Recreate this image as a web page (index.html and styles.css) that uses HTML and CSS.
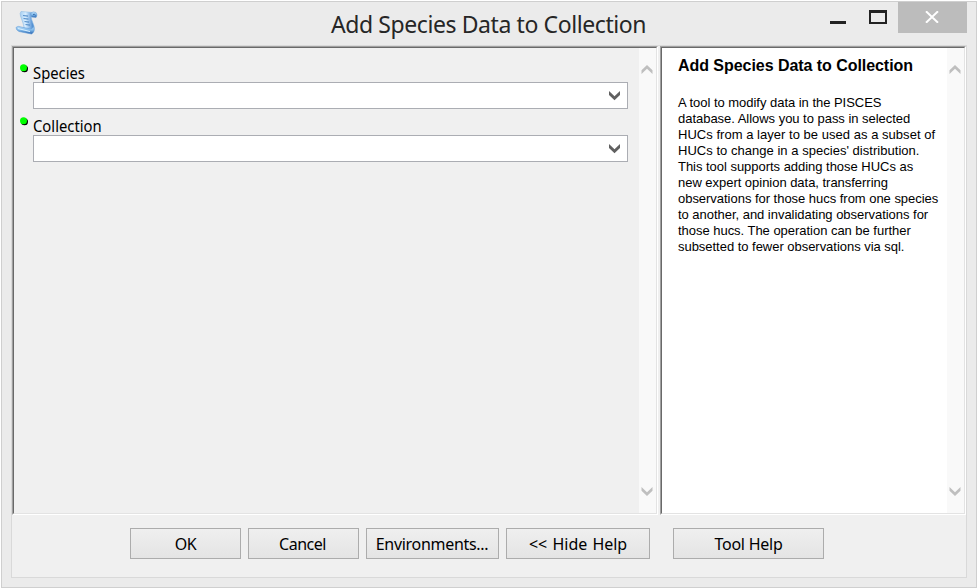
FILE: index.html
```
<!DOCTYPE html>
<html lang="en">
<head>
<meta charset="utf-8">
<title>Add Species Data to Collection</title>
<link rel="stylesheet" href="styles.css">
</head>
<body>
<div class="window">
  <header class="titlebar">
    <svg class="app-icon" width="24" height="26" viewBox="0 0 24 26">
      <defs>
        <linearGradient id="paper" x1="0" y1="0" x2="1" y2="0"><stop offset="0" stop-color="#a5cdf0"/><stop offset=".4" stop-color="#d8eeff"/><stop offset="1" stop-color="#3279c8"/></linearGradient>
        <linearGradient id="roll" x1="0" y1="0" x2="0" y2="1"><stop offset="0" stop-color="#c5e3fa"/><stop offset=".5" stop-color="#82bbeb"/><stop offset="1" stop-color="#245fac"/></linearGradient>
      </defs>
      <path d="M6 1.500 18 2.500Q15.500 5 16.500 9L19 16Q20 21 17 23L8 21Q10 18 8 13L5.500 6Q4.500 3 6 1.500Z" fill="url(#paper)" stroke="#8ebce4" stroke-width=".6"/>
      <path d="M16 3Q18 1 21 2.500Q23 5 21 7.500L16.500 7Q15.500 5 16 3Z" fill="url(#roll)" stroke="#639bd5" stroke-width=".5"/>
      <path d="M18 4.500Q20 3.500 20.500 5.500" fill="none" stroke="#386fae"/>
      <path d="M1 17.500Q3 15.500 6 17L16 19Q18 18.500 18.500 16Q20.500 22 16.500 24L4 21.500Q1 20 1 17.500Z" fill="url(#roll)" stroke="#5f9ad6" stroke-width=".6"/>
      <path d="M3 18.500 15 21.500" stroke="#d8efff" stroke-width="1.200"/>
      <path d="M8 5.500l5 .6M8.500 8.500l5 .6M9.500 11.500l4.500 .6M10.500 14.500l4.500 .6" stroke="#568fc9" stroke-width="1.100"/>
    </svg>
    <h1 class="title">Add Species Data to Collection</h1>
    <div class="controls">
      <span class="minimize"></span>
      <span class="maximize"></span>
      <span class="close"><svg width="14" height="12" viewBox="0 0 14 12"><path d="M1 .3 13 11.700M13 .3 1 11.700" stroke="#fff" stroke-width="2"/></svg></span>
    </div>
  </header>
  <main class="client">
    <div class="panels">
      <section class="panel form">
        <div class="panel-body fields">
          <div class="field">
            <svg class="dot" width="9" height="9" viewBox="0 0 9 9"><circle cx="4.500" cy="4.800" r="3.500" fill="#000"/><circle cx="3.500" cy="3.800" r="3.500" fill="#0f0"/></svg>
            <label class="label"><span class="label-text">Species</span></label>
            <div class="combo"><svg width="13" height="10" viewBox="0 0 13 10"><path d="M1 0 6.500 5.300 12 0V4L6.500 9.300 1 4Z" fill="#606060"/></svg></div>
          </div>
          <div class="field">
            <svg class="dot" width="9" height="9" viewBox="0 0 9 9"><circle cx="4.500" cy="4.800" r="3.500" fill="#000"/><circle cx="3.500" cy="3.800" r="3.500" fill="#0f0"/></svg>
            <label class="label"><span class="label-text">Collection</span></label>
            <div class="combo"><svg width="13" height="10" viewBox="0 0 13 10"><path d="M1 0 6.500 5.300 12 0V4L6.500 9.300 1 4Z" fill="#606060"/></svg></div>
          </div>
        </div>
        <div class="scrollbar">
          <svg width="12" height="10" viewBox="0 0 12 10"><path d="M.5 9V5.300L6 0 11.500 5.300V9L6 3.800Z" fill="#bfbfbf"/></svg>
          <svg width="12" height="10" viewBox="0 0 12 10"><path d="M.5 0V3.700L6 9 11.500 3.700V0L6 5.200Z" fill="#bfbfbf"/></svg>
        </div>
      </section>
      <section class="panel help">
        <div class="panel-body help-body">
          <h2 class="help-title">Add Species Data to Collection</h2>
          <p class="help-text">A tool to modify data in the PISCES<br>database. Allows you to pass in selected<br><span class="wide">HUCs from a layer to be used as a subset of</span><br><span class="wide">HUCs to change in a species' distribution.</span><br>This tool supports adding those HUCs as<br>new expert opinion data, transferring<br>observations for those hucs from one species<br>to another, and invalidating observations for<br>those hucs. The operation can be further<br>subsetted to fewer observations via sql.</p>
        </div>
        <div class="scrollbar">
          <svg width="12" height="10" viewBox="0 0 12 10"><path d="M.5 9V5.300L6 0 11.500 5.300V9L6 3.800Z" fill="#bfbfbf"/></svg>
          <svg width="12" height="10" viewBox="0 0 12 10"><path d="M.5 0V3.700L6 9 11.500 3.700V0L6 5.200Z" fill="#bfbfbf"/></svg>
        </div>
      </section>
    </div>
    <footer class="buttons">
      <button class="btn ok">OK</button>
      <button class="btn cancel">Cancel</button>
      <button class="btn env">Environments...</button>
      <button class="btn hide">&lt;&lt; Hide Help</button>
      <button class="btn tool">Tool Help</button>
    </footer>
  </main>
</div>
</body>
</html>
```
FILE: styles.css
```
* { box-sizing: border-box; }
body { margin: 0; background: #fff; font-family: "Noto Sans", "Open Sans", sans-serif; color: #000; overflow: hidden; }
.window { margin: 1px 0 0 1px; width: 976px; height: 587px; border: 1px solid #cfcfcf; background: #ebebeb; }
.titlebar { display: flex; height: 43px; padding-left: 13px; }
.app-icon { flex: none; margin-top: 8px; }
.title { flex: none; width: 330px; margin: 0 0 0 292px; font-size: 23px; line-height: 44px; font-weight: 400; white-space: nowrap; letter-spacing: -0.41px; color: #262626; }
.controls { display: flex; flex: none; margin-left: 169px; }
.minimize { width: 16px; height: 3px; margin-top: 19px; background: #222; }
.maximize { width: 18px; height: 14px; margin: 8px 0 0 23px; border: 2px solid #222; border-top-width: 3px; }
.close { display: flex; align-items: center; justify-content: center; width: 69px; height: 31px; padding: 0 1px 1px 0; margin-left: 11px; background: #bcbcbc; }
.client { width: 956px; height: 533px; margin-left: 9px; border: 1px solid #d9d9d9; background: #f0f0f0; }
.panels { display: flex; gap: 2px; height: 469px; }
.panel { display: flex; border: 1px solid; border-color: #a0a0a0 #fff #fff #a0a0a0; }
.form { width: 646px; }
.help { width: 306px; }
.panel-body { flex: 1; border: 1px solid; border-color: #696969 transparent #e3e3e3 #696969; border-right: 0; }
.scrollbar { display: flex; flex-direction: column; justify-content: space-between; align-items: flex-start; width: 18px; padding: 17px 0 16px 2px; background: #f9f9f9; border: 1px solid; border-color: #696969 #e3e3e3 #e3e3e3; border-left: 0; }
.fields { padding: 14px 11px 0 6px; }
.field { display: grid; grid-template-columns: 13px 595px; grid-template-rows: 20px 27px; margin-bottom: 6px; }
.dot { margin-top: 2px; }
.label { font-size: 16px; line-height: 23px; white-space: nowrap; }
.label-text { display: inline-block; transform: scaleX(.925); transform-origin: left; }
.combo { grid-column: 2; display: flex; align-items: center; justify-content: flex-end; padding-right: 6px; border: 1px solid #abadb3; background: #fff; }
.help-body { padding: 8px 0 0 16px; background: #fff; font-family: "Liberation Sans", sans-serif; white-space: nowrap; }
.help-title { margin: 0; font-size: 16px; line-height: 19px; letter-spacing: -0.05px; }
.help-text { margin: 20px 0 0; font-size: 13px; line-height: 16px; letter-spacing: -0.03px; }
.wide { letter-spacing: 0.03px; }
.buttons { display: flex; gap: 7px; padding: 13px 0 0 118px; }
.btn { height: 31px; padding: 2px 0 0; border: 1px solid #acacac; background: linear-gradient(#efefef, #e4e4e4); font: 16px/27px "Noto Sans", sans-serif; letter-spacing: -0.5px; color: #000; white-space: nowrap; }
.ok { width: 111px; }
.cancel { width: 111px; padding-right: 2px; }
.env { width: 133px; padding-right: 1px; letter-spacing: -0.3px; }
.hide { width: 144px; letter-spacing: -0.1px; word-spacing: 1.5px; }
.tool { width: 151px; margin-left: 16px; letter-spacing: -0.25px; }
```
